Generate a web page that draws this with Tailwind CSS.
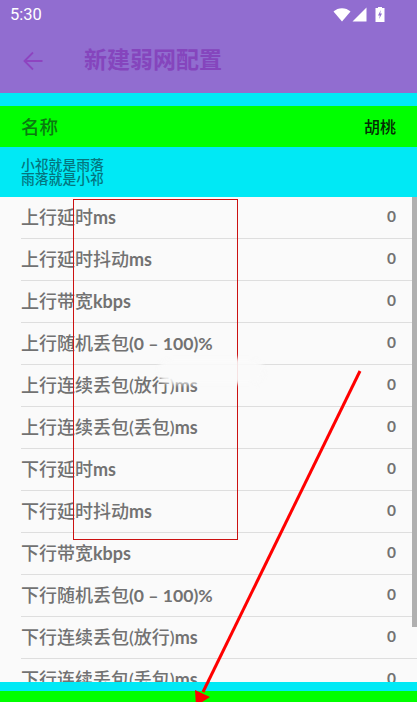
<!DOCTYPE html>
<html lang="zh">
  <head>
    <meta charset="UTF-8" />
    <meta name="viewport" content="width=device-width, initial-scale=1.0" />
    <title>新建弱网配置</title>
    <script src="https://cdn.jsdelivr.net/npm/@tailwindcss/browser@4"></script>
  </head>

  <body class="bg-[#fafafa] font-['Lato','Noto_Sans_CJK_SC',sans-serif]">
    <div class="relative w-[417px] h-[702px] overflow-hidden">
      <!-- status bar + toolbar -->
      <div class="h-[93px] bg-[#916dd0]">
        <div class="h-[29px] pl-[10px] pr-[32px] flex items-center justify-between">
          <span class="mt-[1px] text-[16.500px] leading-none text-white font-['Roboto']">5:30</span>
          <div class="flex items-center">
            <svg width="18" height="15" viewBox="0 0 18 15" class="mr-[1px]"><path d="M0.500 4.500C5 0 13 0 17.500 4.500L9 14.500Z" fill="#fff" /></svg>
            <svg width="15" height="15" viewBox="0 0 15 15" class="mr-[8px]"><path d="M14.500 0.500V14.500H0.500Z" fill="#fff" /></svg>
            <svg width="10" height="15" viewBox="0 0 10 15"><path d="M3 0H7V1H9.500V15H0.500V1H3Z" fill="#fff" /><path d="M5.800 3L3 8.500H4.800L4.200 12L7 6.500H5.200Z" fill="#916dd0" /></svg>
          </div>
        </div>
        <div class="h-[64px] flex items-center pl-[23px]">
          <svg width="20" height="20" viewBox="0 0 20 20" fill="none" stroke="#8e44c0" stroke-width="1.800"><path d="M19.500 10H1.500M10 1.500L1.500 10L10 18.500" /></svg>
          <span class="ml-[41px] mb-[3px] text-[23px] leading-none font-bold text-[#8545bd]">新建弱网配置</span>
        </div>
      </div>

      <div class="h-[13px] bg-[#00e9f5]"></div>

      <!-- name row -->
      <div class="h-[41px] bg-[#00ff00] px-[21px] flex items-center justify-between">
        <span class="mt-[1px] text-[18.500px] leading-none font-medium text-[#0a7a10]">名称</span>
        <span class="text-[16px] leading-none font-medium text-[#052a05]">胡桃</span>
      </div>

      <div class="h-[50px] bg-[#00e9f5] pl-[21px] pt-[11px] text-[13.800px] leading-[14px] font-medium text-[#04757e]">
        <div>小祁就是雨落</div>
        <div>雨落就是小祁</div>
      </div>

      <!-- config rows -->
      <div class="pl-[21px] text-[#727272]">
        <div class="h-[42px] pr-[21px] flex justify-between items-center border-b border-[#dedede]"><span class="text-[18px] font-medium">上行延时<span class="font-bold">ms</span></span><span class="mb-[2px] text-[15.500px] font-bold">0</span></div>
        <div class="h-[42px] pr-[21px] flex justify-between items-center border-b border-[#dedede]"><span class="text-[18px] font-medium">上行延时抖动<span class="font-bold">ms</span></span><span class="mb-[2px] text-[15.500px] font-bold">0</span></div>
        <div class="h-[42px] pr-[21px] flex justify-between items-center border-b border-[#dedede]"><span class="text-[18px] font-medium">上行带宽<span class="font-bold">kbps</span></span><span class="mb-[2px] text-[15.500px] font-bold">0</span></div>
        <div class="h-[42px] pr-[21px] flex justify-between items-center border-b border-[#dedede]"><span class="text-[18px] font-medium">上行随机丢包<span class="text-[17.600px] font-bold">(0 – 100)%</span></span><span class="mb-[2px] text-[15.500px] font-bold">0</span></div>
        <div class="h-[42px] pr-[21px] flex justify-between items-center border-b border-[#dedede]"><span class="text-[18px] font-medium">上行连续丢包(放行)<span class="font-bold">ms</span></span><span class="mb-[2px] text-[15.500px] font-bold">0</span></div>
        <div class="h-[42px] pr-[21px] flex justify-between items-center border-b border-[#dedede]"><span class="text-[18px] font-medium">上行连续丢包(丢包)<span class="font-bold">ms</span></span><span class="mb-[2px] text-[15.500px] font-bold">0</span></div>
        <div class="h-[42px] pr-[21px] flex justify-between items-center border-b border-[#dedede]"><span class="text-[18px] font-medium">下行延时<span class="font-bold">ms</span></span><span class="mb-[2px] text-[15.500px] font-bold">0</span></div>
        <div class="h-[42px] pr-[21px] flex justify-between items-center border-b border-[#dedede]"><span class="text-[18px] font-medium">下行延时抖动<span class="font-bold">ms</span></span><span class="mb-[2px] text-[15.500px] font-bold">0</span></div>
        <div class="h-[42px] pr-[21px] flex justify-between items-center border-b border-[#dedede]"><span class="text-[18px] font-medium">下行带宽<span class="font-bold">kbps</span></span><span class="mb-[2px] text-[15.500px] font-bold">0</span></div>
        <div class="h-[42px] pr-[21px] flex justify-between items-center border-b border-[#dedede]"><span class="text-[18px] font-medium">下行随机丢包<span class="text-[17.600px] font-bold">(0 – 100)%</span></span><span class="mb-[2px] text-[15.500px] font-bold">0</span></div>
        <div class="h-[42px] pr-[21px] flex justify-between items-center border-b border-[#dedede]"><span class="text-[18px] font-medium">下行连续丢包(放行)<span class="font-bold">ms</span></span><span class="mb-[2px] text-[15.500px] font-bold">0</span></div>
        <div class="h-[42px] pr-[21px] flex justify-between items-center border-b border-[#dedede]"><span class="text-[18px] font-medium">下行连续丢包(丢包)<span class="font-bold">ms</span></span><span class="mb-[2px] text-[15.500px] font-bold">0</span></div>
      </div>

      <!-- scrollbar -->
      <div class="absolute left-[412px] top-[197px] w-[5px] h-[430px] bg-[#b0b0b0]"></div>

      <!-- bottom bars -->
      <div class="absolute left-0 right-0 bottom-0">
        <div class="h-[9px] bg-[#00e9f5]"></div>
        <div class="h-[11px] bg-[#00ff00]"></div>
      </div>

      <!-- annotations drawn over the screenshot -->
      <div class="absolute left-[73px] top-[199px] w-[165px] h-[341px] border border-[#cc1111]"></div>
      <div class="absolute left-[158px] top-[358px] w-[106px] h-[26px] bg-[#fafafa]/90 rounded-full blur-[2px]"></div>
      <svg class="absolute left-0 top-0" width="417" height="702" viewBox="0 0 417 702" fill="none">
        <path d="M360 371L203 692" stroke="#ff0000" stroke-width="3" />
        <path d="M196 706L195 690L210 697Z" fill="#ff0000" />
      </svg>
    </div>
  </body>
</html>
